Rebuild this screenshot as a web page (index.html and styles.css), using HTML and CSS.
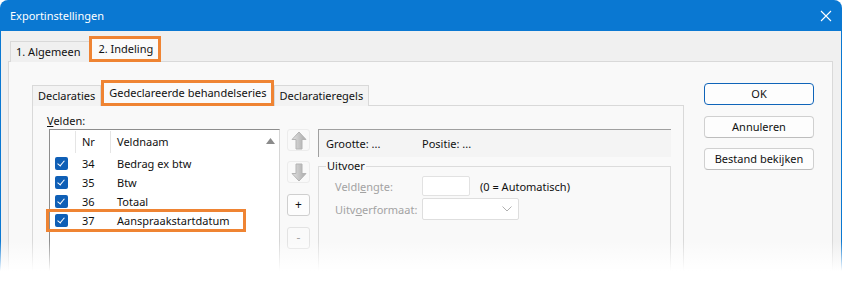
FILE: index.html
```html
<!DOCTYPE html>
<html lang="nl">
<head>
    <meta charset="UTF-8">
    <title>Exportinstellingen</title>
    <link rel="stylesheet" href="styles.css">
</head>
<body>
    <div class="window">
        <div class="titlebar">
            <span class="title">Exportinstellingen</span>
            <svg class="close" width="12" height="12" viewBox="0 0 12 12">
                <path d="M1 1 L11 11 M11 1 L1 11" stroke="#fff" stroke-width="1.1" fill="none"/>
            </svg>
        </div>

        <div class="client">
            <div class="tabs outer-tabs">
                <div class="tab">1. Algemeen</div>
                <div class="tab tab-active marked">2. Indeling</div>
            </div>

            <div class="outer-panel">
                <div class="page">
                    <div class="tabs inner-tabs">
                        <div class="tab">Declaraties</div>
                        <div class="tab tab-active marked">Gedeclareerde behandelseries</div>
                        <div class="tab">Declaratieregels</div>
                    </div>

                    <div class="inner-panel">
                        <div class="field-label"><u>V</u>elden:</div>

                        <div class="fields">
                            <div class="listbox">
                                <div class="list-main">
                                    <div class="list-head">
                                        <span class="col-check"></span>
                                        <span class="col-nr">Nr</span>
                                        <span class="col-name">Veldnaam</span>
                                    </div>
                                    <div class="list-row">
                                        <span class="col-check"><span class="checkbox"></span></span>
                                        <span class="col-nr">34</span>
                                        <span class="col-name">Bedrag ex btw</span>
                                    </div>
                                    <div class="list-row">
                                        <span class="col-check"><span class="checkbox"></span></span>
                                        <span class="col-nr">35</span>
                                        <span class="col-name">Btw</span>
                                    </div>
                                    <div class="list-row">
                                        <span class="col-check"><span class="checkbox"></span></span>
                                        <span class="col-nr">36</span>
                                        <span class="col-name">Totaal</span>
                                    </div>
                                    <div class="list-row row-marked">
                                        <span class="col-check"><span class="checkbox"></span></span>
                                        <span class="col-nr">37</span>
                                        <span class="col-name">Aanspraakstartdatum</span>
                                    </div>
                                </div>
                                <div class="scrollbar">
                                    <svg width="9" height="6" viewBox="0 0 9 6"><path d="M0 6 L4.5 0 L9 6 Z" fill="#8b8b8b"/></svg>
                                </div>
                            </div>

                            <div class="move-buttons">
                                <div class="small-btn disabled">
                                    <svg width="16" height="19" viewBox="0 0 16 19">
                                        <defs>
                                            <linearGradient id="arrowUp" x1="0" y1="0" x2="1" y2="0">
                                                <stop offset="0" stop-color="#e2e2e2"/>
                                                <stop offset="1" stop-color="#a9a9a9"/>
                                            </linearGradient>
                                        </defs>
                                        <path d="M8 1 L15 8.5 L11 8.5 L11 18 L5 18 L5 8.5 L1 8.5 Z" fill="url(#arrowUp)" stroke="#b4b4b4" stroke-width="1"/>
                                    </svg>
                                </div>
                                <div class="small-btn disabled">
                                    <svg width="16" height="19" viewBox="0 0 16 19">
                                        <defs>
                                            <linearGradient id="arrowDown" x1="0" y1="0" x2="1" y2="0">
                                                <stop offset="0" stop-color="#e2e2e2"/>
                                                <stop offset="1" stop-color="#a9a9a9"/>
                                            </linearGradient>
                                        </defs>
                                        <path d="M8 18 L15 10.5 L11 10.5 L11 1 L5 1 L5 10.5 L1 10.5 Z" fill="url(#arrowDown)" stroke="#b4b4b4" stroke-width="1"/>
                                    </svg>
                                </div>
                                <div class="small-btn bordered">+</div>
                                <div class="small-btn bordered disabled">-</div>
                            </div>

                            <div class="details">
                                <div class="info-box">
                                    <span class="info-size">Grootte: ...</span>
                                    <span>Positie: ...</span>
                                </div>
                                <fieldset class="group">
                                    <legend>Uitvoer</legend>
                                    <div class="form-row">
                                        <span class="form-label">Veldl<u>e</u>ngte:</span>
                                        <span class="text-input"></span>
                                        <span class="hint">(0 = Automatisch)</span>
                                    </div>
                                    <div class="form-row">
                                        <span class="form-label">Uitv<u>o</u>erformaat:</span>
                                        <span class="select">
                                            <svg width="10" height="6" viewBox="0 0 10 6"><path d="M0.5 0.5 L5 5 L9.5 0.5" stroke="#b0b0b0" fill="none"/></svg>
                                        </span>
                                    </div>
                                </fieldset>
                            </div>
                        </div>
                    </div>
                </div>

                <div class="dialog-buttons">
                    <div class="button button-default">OK</div>
                    <div class="button">Annuleren</div>
                    <div class="button">Bestand bekijken</div>
                </div>
            </div>
        </div>

        <div class="fade"></div>
    </div>
</body>
</html>
```

FILE: styles.css
```css
body {
    margin: 0;
    background: #fff;
    font-family: 'Noto Sans', 'Open Sans', sans-serif;
    font-size: 11px;
    color: #111;
}

.window {
    position: relative;
    width: 842px;
    height: 281px;
    overflow: hidden;
}

.titlebar {
    height: 31px;
    background: #0a78d2;
    border-radius: 8px 8px 0 0;
    display: flex;
    align-items: center;
    justify-content: space-between;
    padding: 0 10px 0 10px;
    color: #fff;
}

.title {
    font-size: 11px;
}

.close {
    display: block;
    margin-top: 1px;
}

.client {
    background: #f0f0f0;
    border-left: 1px solid #0a78d2;
    border-right: 1px solid #0a78d2;
    height: 300px;
}

/* Tabs */
.tabs {
    display: flex;
    align-items: flex-end;
    position: relative;
    z-index: 1;
}

.tab {
    height: 20px;
    line-height: 19px;
    padding: 0 5px;
    border: 1px solid #d9d9d9;
    border-bottom: none;
    background: #f0f0f0;
    white-space: nowrap;
}

.tab-active {
    background: #fafafa;
}

.marked {
    border: 3px solid #ef8433;
    height: 20px;
    line-height: 19px;
    padding: 0 4px 0 5px;
}

.outer-tabs {
    padding: 5px 0 0 9px;
    margin-bottom: -1px;
}

.outer-tabs .tab {
    padding: 0 9px 0 5px;
}

.outer-tabs .marked {
    padding: 0 5px 0 6px;
}

.outer-tabs .tab + .tab {
    margin-left: -1px;
}

.outer-panel {
    display: flex;
    margin: 0 8px 0 7px;
    padding: 18px 0 0 23px;
    background: #f9f9f9;
    border: 1px solid #d9d9d9;
    height: 260px;
}

.page {
    width: 652px;
}

.inner-tabs {
    margin-bottom: -1px;
}

.inner-tabs .tab {
    background: #f3f3f3;
}

.inner-tabs .marked {
    background: #fafafa;
}

.inner-panel {
    background: #f9f9f9;
    border: 1px solid #d9d9d9;
    padding: 7px 0 0 14px;
    height: 200px;
}

.field-label {
    line-height: 16px;
}

.fields {
    display: flex;
    align-items: flex-start;
    margin-left: 2px;
}

/* List */
.listbox {
    width: 229px;
    height: 170px;
    display: flex;
    background: #fff;
    border: 1px solid #8d8d8d;
    border-right-color: #d6d6d6;
    border-bottom: none;
}

.list-main {
    flex: 1;
}

.list-head,
.list-row {
    display: flex;
    align-items: center;
}

.list-head {
    height: 24px;
}

.list-head span {
    height: 22px;
    line-height: 22px;
    border-right: 1px solid #e5e5e5;
}

.list-head .col-name {
    border-right: none;
}

.list-row {
    height: 19px;
    position: relative;
}

.col-check {
    width: 26px;
    padding-left: 5px;
    box-sizing: border-box;
    display: flex;
}

.col-nr {
    width: 35px;
    padding-left: 6px;
    box-sizing: border-box;
}

.col-name {
    flex: 1;
    padding-left: 6px;
}

.checkbox {
    width: 13px;
    height: 13px;
    border-radius: 2px;
    background: #0f5fb6;
    position: relative;
}

.checkbox::after {
    content: "";
    position: absolute;
    left: 4px;
    top: 2px;
    width: 3px;
    height: 6px;
    border-right: 1px solid #fff;
    border-bottom: 1px solid #fff;
    transform: rotate(40deg);
}

.row-marked::before {
    content: "";
    position: absolute;
    left: -4px;
    top: -2px;
    width: 194px;
    height: 17px;
    border: 3px solid #ef8433;
}

.scrollbar {
    width: 17px;
    display: flex;
    justify-content: center;
    padding-top: 8px;
    box-sizing: border-box;
}

/* Move buttons */
.move-buttons {
    display: flex;
    flex-direction: column;
    gap: 10px;
    margin-left: 7px;
}

.small-btn {
    width: 23px;
    height: 22px;
    box-sizing: border-box;
    border-radius: 3px;
    border: 1px solid #ececec;
    display: flex;
    align-items: center;
    justify-content: center;
    font-size: 12px;
    line-height: 1;
}

.small-btn + .small-btn + .small-btn {
    margin-top: 1px;
}

.bordered {
    border-color: #cfcfcf;
    background: #fdfdfd;
}

.bordered.disabled {
    border-color: #e3e3e3;
    background: #fafafa;
    color: #a6a6a6;
}

/* Details */
.details {
    width: 353px;
    margin-left: 8px;
}

.info-box {
    height: 27px;
    display: flex;
    align-items: center;
    padding-left: 7px;
    background: #f4f4f4;
    border-top: 1px solid #a0a0a0;
    border-left: 1px solid #a0a0a0;
}

.info-size {
    width: 96px;
}

.group {
    margin: 1px 0 0;
    padding: 2px 0 0 16px;
    border: 1px solid #dcdcdc;
    height: 120px;
}

.group legend {
    padding: 0 1px;
    margin-left: -9px;
    line-height: 16px;
}

.form-row {
    display: flex;
    align-items: center;
    height: 20px;
    margin-bottom: 3px;
}

.form-label {
    width: 87px;
    color: #a3a3a3;
}

.form-label u {
    text-decoration-color: #a3a3a3;
}

.text-input {
    width: 48px;
    height: 20px;
    box-sizing: border-box;
    background: #fff;
    border: 1px solid #e2e2e2;
    border-radius: 2px;
}

.hint {
    margin-left: 10px;
}

.select {
    width: 97px;
    height: 22px;
    box-sizing: border-box;
    background: #fff;
    border: 1px solid #dedede;
    border-radius: 2px;
    display: flex;
    align-items: center;
    justify-content: flex-end;
    padding-right: 6px;
}

/* Dialog buttons */
.dialog-buttons {
    display: flex;
    flex-direction: column;
    gap: 10px;
    margin: 3px 0 0 20px;
}

.button {
    width: 110px;
    height: 22px;
    box-sizing: border-box;
    border: 1px solid #d0d0d0;
    border-bottom-color: #bdbdbd;
    border-radius: 4px;
    background: #fdfdfd;
    text-align: center;
    line-height: 20px;
}

.button-default {
    border-color: #0f64b9;
    margin-bottom: 1px;
}

.fade {
    position: absolute;
    left: 0;
    right: 0;
    bottom: 0;
    height: 40px;
    background: linear-gradient(to bottom, rgba(255, 255, 255, 0), #fff 75%);
}
```
